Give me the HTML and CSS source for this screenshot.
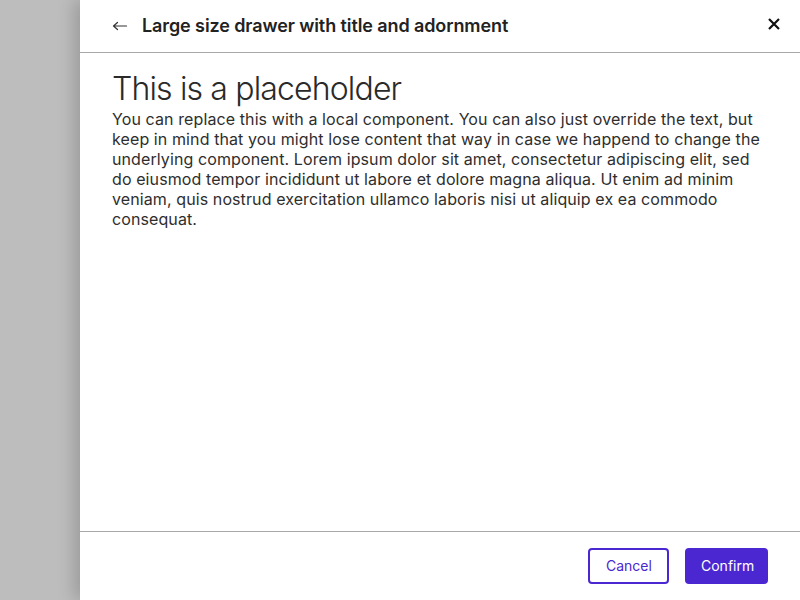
FILE: index.html
```html
<!DOCTYPE html>
<html lang="en">
<head>
<meta charset="utf-8">
<title>Drawer</title>
<link rel="stylesheet" href="styles.css">
</head>
<body>
<div class="page">
  <div class="overlay"></div>
  <aside class="drawer">
    <header class="drawer-header">
      <button class="icon-btn back" aria-label="Back">
        <svg width="16" height="16" viewBox="0 0 16 16" fill="none" stroke="#333" stroke-width="1.2" stroke-linecap="round" stroke-linejoin="round"><path d="M1.5 8h13M5.5 4.5L1.5 8l4 3.5"/></svg>
      </button>
      <h1 class="drawer-title">Large size drawer with title and adornment</h1>
      <button class="icon-btn close" aria-label="Close">
        <svg width="12" height="12" viewBox="0 0 12 12" fill="none" stroke="#111" stroke-width="2.2"><path d="M1 1l10 10M11 1L1 11"/></svg>
      </button>
    </header>
    <main class="drawer-body">
      <h2 class="placeholder-title">This is a placeholder</h2>
      <p class="placeholder-text">You can replace this with a local component. You can also just override the text, but keep in mind that you might lose content that way in case we happend to change the underlying component. Lorem ipsum dolor sit amet, consectetur adipiscing elit, sed do eiusmod tempor incididunt ut labore et dolore magna aliqua. Ut enim ad minim veniam, quis nostrud exercitation ullamco laboris nisi ut aliquip ex ea commodo consequat.</p>
    </main>
    <footer class="drawer-footer">
      <button class="btn btn-secondary">Cancel</button>
      <button class="btn btn-primary">Confirm</button>
    </footer>
  </aside>
</div>
</body>
</html>
```

FILE: styles.css
```css
* { box-sizing: border-box; }
html, body { margin: 0; padding: 0; }
body {
  font-family: Inter, "Noto Sans", sans-serif;
  color: #262626;
}
.page {
  display: flex;
  width: 800px;
  height: 600px;
  background: #bdbdbd;
  overflow: hidden;
}
.overlay { flex: 1; }
.drawer {
  width: 720px;
  height: 600px;
  background: #fff;
  display: flex;
  flex-direction: column;
  box-shadow: -6px 0 16px rgba(0, 0, 0, 0.18);
}
.drawer-header {
  height: 53px;
  border-bottom: 1px solid #a8a8a8;
  display: flex;
  align-items: center;
  padding: 0 16px 0 32px;
}
.icon-btn {
  background: none;
  border: 0;
  padding: 0;
  display: flex;
  align-items: center;
  justify-content: center;
  cursor: pointer;
}
.back { margin-right: 14px; }
.drawer-title {
  margin: 0;
  flex: 1;
  font-size: 18px;
  font-weight: 600;
  letter-spacing: -0.1px;
  color: #222;
  line-height: 24px;
}
.close { width: 20px; height: 20px; margin-top: -4px; }
.drawer-body {
  flex: 1;
  padding: 16px 32px 0 32px;
}
.placeholder-title {
  margin: 0;
  font-size: 32px;
  font-weight: 300;
  letter-spacing: -0.85px;
  line-height: 40px;
  color: #2a2a2a;
}
.placeholder-text {
  margin: 0;
  font-size: 16px;
  line-height: 20px;
  letter-spacing: 0.1px;
  color: #2e2e2e;
}
.drawer-footer {
  border-top: 1px solid #a8a8a8;
  display: flex;
  justify-content: flex-end;
  gap: 16px;
  padding: 16px 32px 16px 32px;
}
.btn {
  height: 36px;
  border-radius: 4px;
  font-family: Inter, "Noto Sans", sans-serif;
  font-size: 14px;
  padding: 0 16px 1px;
  cursor: pointer;
}
.btn-secondary {
  background: #fff;
  border: 2px solid #4a27d1;
  color: #4a27d1;
  width: 81px;
}
.btn-primary {
  background: #4a27d1;
  border: 0;
  color: #fff;
  width: 83px;
}
```
